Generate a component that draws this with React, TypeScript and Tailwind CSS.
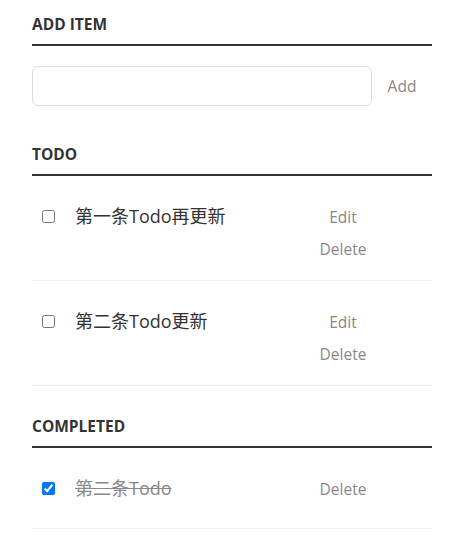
import React from "react";

const font = { fontFamily: '"Open Sans", "Noto Sans CJK SC", sans-serif' };

function Heading({ children, first }: { children: React.ReactNode; first?: boolean }) {
  return (
    <h3
      className={`m-0 ${first ? "pt-[14px]" : "pt-[30px]"} pb-[10px] border-b-[2px] border-[#333] text-[15.5px] leading-[20px] font-bold uppercase text-[#333]`}
    >
      {children}
    </h3>
  );
}

function Item({ text, done }: { text: string; done?: boolean }) {
  return (
    <li className="flex py-[20px] border-b border-[#eee]">
      <div className="h-[40px] flex items-center shrink-0">
        <input
          type="checkbox"
          defaultChecked={done}
          className="w-[13px] h-[13px] ml-[10px] m-0"
        />
      </div>
      <label
        className={`w-[258px] shrink-0 pl-[20px] pr-[1px] text-[18px] leading-[40px] ${done ? "line-through text-[#888]" : "text-[#333]"}`}
      >
        {text}
      </label>
      <div className="flex flex-col w-[60px] shrink-0">
        {!done && (
          <button className="mt-[10px] h-[22px] w-[60px] text-[15.5px] leading-[22px] text-[#888] bg-transparent">
            Edit
          </button>
        )}
        <button className="mt-[10px] h-[22px] w-[60px] text-[15.5px] leading-[22px] text-[#888] bg-transparent">
          Delete
        </button>
      </div>
    </li>
  );
}

export default function App() {
  return (
    <div className="w-[400px] ml-[32px] bg-white" style={font}>
      <Heading first>Add Item</Heading>
      <div className="flex mt-[20px]">
        <input
          type="text"
          className="w-[340px] h-[40px] px-[10px] border border-[#ddd] rounded-[6px] text-[18px] text-[#888] outline-none"
        />
        <button className="w-[60px] text-[15.5px] text-[#888] bg-transparent mt-[2px]">Add</button>
      </div>
      <div className="h-[8px]" />
      <Heading>Todo</Heading>
      <ul className="m-0 p-0 list-none">
        <Item text="第一条Todo再更新" />
        <Item text="第二条Todo更新" />
      </ul>
      <Heading>Completed</Heading>
      <ul className="m-0 p-0 list-none">
        <Item text="第二条Todo" done />
      </ul>
    </div>
  );
}
